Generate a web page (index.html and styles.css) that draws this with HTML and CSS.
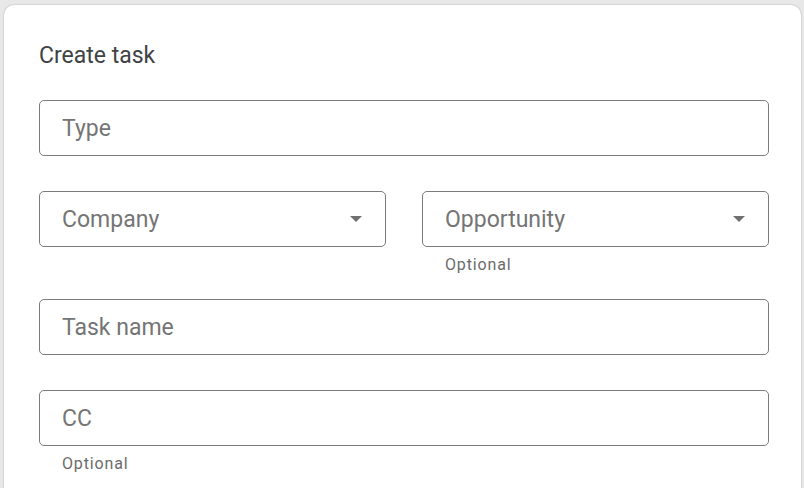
FILE: index.html
```html
<!DOCTYPE html>
<html>
<head>
<meta charset="utf-8">
<link rel="stylesheet" href="styles.css">
</head>
<body>
<div class="card">
  <h1 class="title">Create task</h1>
  <div class="field">
    <div class="box"><span class="ph">Type</span></div>
  </div>
  <div class="row">
    <div class="field">
      <div class="box"><span class="ph">Company</span><span class="arrow"></span></div>
    </div>
    <div class="field hinted">
      <div class="box"><span class="ph">Opportunity</span><span class="arrow"></span></div>
      <div class="hint">Optional</div>
    </div>
  </div>
  <div class="field">
    <div class="box"><span class="ph">Task name</span></div>
  </div>
  <div class="field hinted">
    <div class="box"><span class="ph">CC</span></div>
    <div class="hint">Optional</div>
  </div>
</div>
</body>
</html>
```
FILE: styles.css
```css
html, body {
  margin: 0;
  padding: 0;
  background: #e8e8e8;
  font-family: Roboto, "Liberation Sans", sans-serif;
  overflow: hidden;
}
body {
  padding: 5px 3px 0 4px;
  height: 488px;
  box-sizing: border-box;
}
.card {
  background: #fff;
  border-radius: 10px 10px 0 0;
  box-shadow: 0 0 2px rgba(0,0,0,0.28);
  padding: 37px 32px 40px 35px;
  height: 600px;
  box-sizing: border-box;
}
.title {
  margin: 0 0 30px 0;
  font-size: 23px;
  line-height: 28px;
  font-weight: 400;
  color: #404346;
}
.field {
  margin-bottom: 35px;
}
.field.hinted {
  margin-bottom: 24px;
}
.row {
  display: grid;
  grid-template-columns: 1fr 1fr;
  column-gap: 36px;
  margin-bottom: 52px;
}
.row .field {
  margin-bottom: 0;
}
.row .field.hinted {
  margin-bottom: -28px;
}
.box {
  height: 56px;
  box-sizing: border-box;
  border: 1px solid #7b7b7b;
  border-radius: 5px;
  display: flex;
  align-items: center;
  padding: 0 23px 0 22px;
}
.ph {
  flex: 1;
  font-size: 23px;
  color: #757575;
  line-height: 28px;
  padding-top: 2px;
}
.arrow {
  width: 0;
  height: 0;
  border-left: 6.5px solid transparent;
  border-right: 6.5px solid transparent;
  border-top: 6.5px solid #707070;
}
.hint {
  margin-top: 8px;
  padding-left: 23px;
  font-size: 16px;
  line-height: 20px;
  letter-spacing: 0.85px;
  color: #6b6b6b;
}
```
